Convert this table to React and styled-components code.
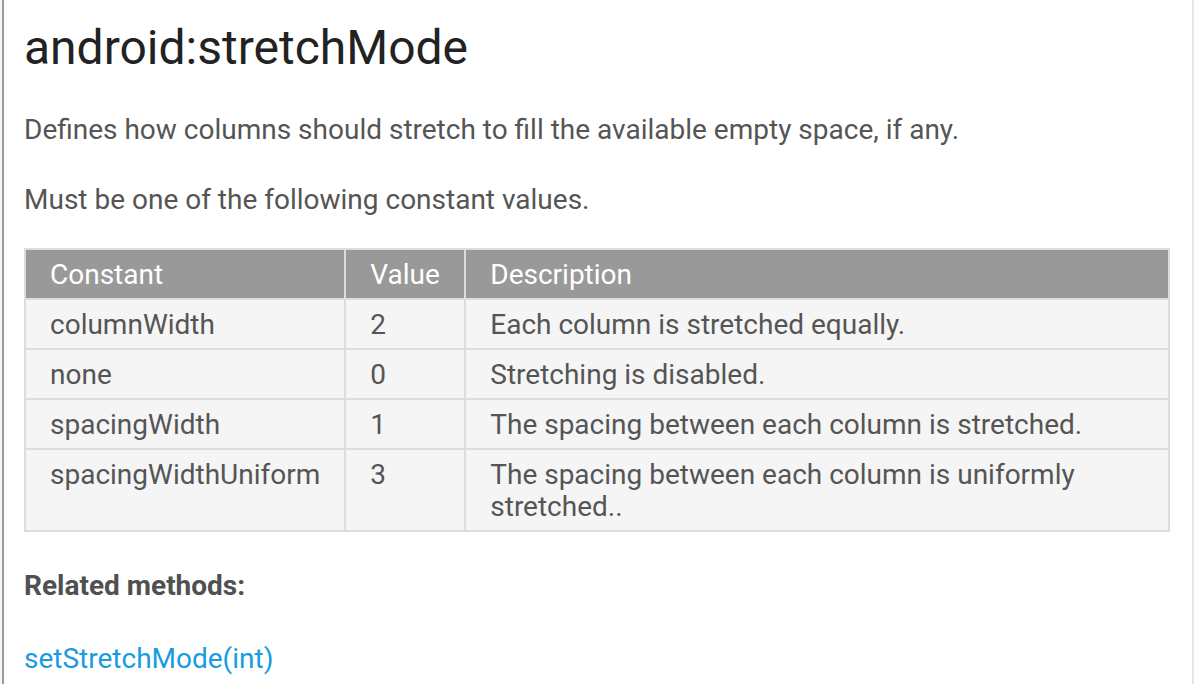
import React from "react";
import styled, { createGlobalStyle } from "styled-components";

const GlobalStyle = createGlobalStyle`
  html, body {
    margin: 0;
    padding: 0;
    background: #ffffff;
  }
  body {
    font-family: Roboto, "Liberation Sans", sans-serif;
  }
`;

const rows = [
  { name: "columnWidth", value: "2", desc: "Each column is stretched equally." },
  { name: "none", value: "0", desc: "Stretching is disabled." },
  { name: "spacingWidth", value: "1", desc: "The spacing between each column is stretched." },
  {
    name: "spacingWidthUniform",
    value: "3",
    desc: "The spacing between each column is uniformly stretched..",
  },
];

const App = () => {
  return (
    <>
      <GlobalStyle />
      <Page>
        <Panel>
          <Title>android:stretchMode</Title>
          <Text>Defines how columns should stretch to fill the available empty space, if any.</Text>
          <Text>Must be one of the following constant values.</Text>
          <Table>
            <thead>
              <tr>
                <Head width={318}>Constant</Head>
                <Head width={118}>Value</Head>
                <Head>Description</Head>
              </tr>
            </thead>
            <tbody>
              {rows.map((row) => (
                <tr key={row.name}>
                  <Cell>{row.name}</Cell>
                  <Cell>{row.value}</Cell>
                  <Cell>{row.desc}</Cell>
                </tr>
              ))}
            </tbody>
          </Table>
          <Label>Related methods:</Label>
          <MethodLink href="#">setStretchMode(int)</MethodLink>
        </Panel>
      </Page>
    </>
  );
};

const Page = styled.div`
  display: flex;
  height: 684px;
  padding-left: 2px;
  background: #f7f7f7;
  overflow: hidden;
`;
const Panel = styled.div`
  flex: 1;
  max-width: 1186px;
  background: #ffffff;
  border-left: 2px solid #9a9a9a;
  border-right: 2px solid #e6e6e6;
  padding: 0 20px;
  color: #555555;
`;
const Title = styled.h1`
  margin: 20px 0 0;
  font-size: 48px;
  font-weight: 400;
  line-height: 56px;
  color: #222222;
`;
const Text = styled.p`
  margin: 0;
  padding-top: 38px;
  font-size: 28px;
  line-height: 32px;
`;
const Table = styled.table`
  width: 1146px;
  margin-top: 32px;
  border-collapse: collapse;
  border: 2px solid #dddddd;
  font-size: 28px;
  line-height: 32px;
`;
const Head = styled.th`
  width: ${(p) => (p.width ? `${p.width - 48}px` : "auto")};
  padding: 9px 24px 7px;
  background: #999999;
  color: #ffffff;
  font-weight: 400;
  text-align: left;
  border: 2px solid #dddddd;
`;
const Cell = styled.td`
  padding: 9px 24px 7px;
  background: #f5f5f5;
  vertical-align: top;
  border: 2px solid #dddddd;
`;
const Label = styled.div`
  margin-top: 38px;
  font-size: 28px;
  line-height: 32px;
  font-weight: 700;
  color: #505050;
`;
const MethodLink = styled.a`
  display: inline-block;
  margin-top: 41px;
  font-size: 28px;
  line-height: 32px;
  color: #1a9be0;
  text-decoration: none;
`;

export default App;
